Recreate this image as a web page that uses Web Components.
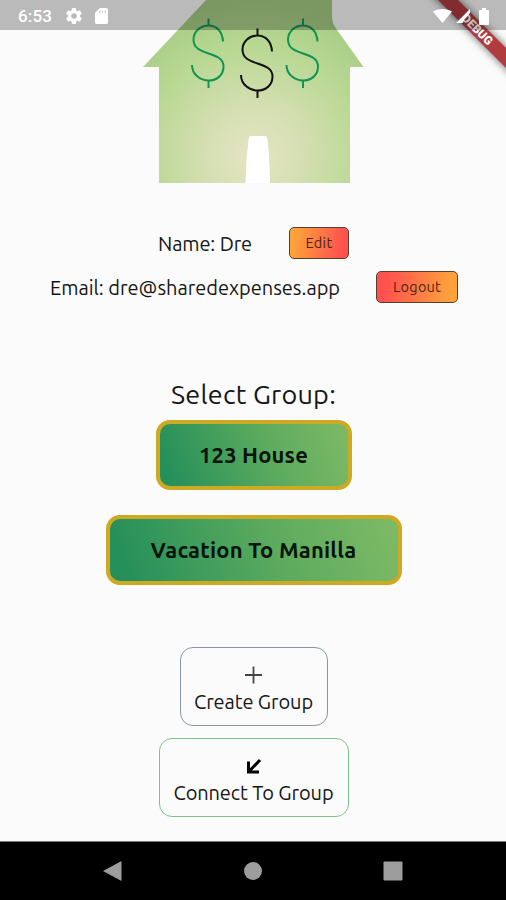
<!DOCTYPE html>
<html lang="en">
<head>
<meta charset="utf-8">
<title>Shared Expenses</title>
<style>
  body { margin: 0; }
</style>
</head>
<body>
<expenses-app></expenses-app>

<script>
// one line of text, tracked so that it spans the given width
class TextLine extends HTMLElement {
  constructor() {
    super();
    this.attachShadow({ mode: "open" });
    this.shadowRoot.innerHTML = `
      <style>
        :host { display:block; white-space:nowrap; }
        span { display:inline-block; }
      </style>
      <span><slot></slot></span>
    `;
  }

  connectedCallback() {
    const span = this.shadowRoot.querySelector("span");
    const target = Number(this.getAttribute("width"));
    const count = this.textContent.length;
    if (!target || !count) return;
    const spacing = (target - span.getBoundingClientRect().width) / count;
    span.style.letterSpacing = `${spacing.toFixed(3)}px`;
  }
}

class StatusBar extends HTMLElement {
  constructor() {
    super();
    this.attachShadow({ mode: "open" });
    this.shadowRoot.innerHTML = `
      <style>
        :host {
          display:flex; align-items:center; box-sizing:border-box; height:30px;
          padding:2px 17px 0 18px; background:rgba(0,0,0,.26); color:#fff;
          font:500 17px/28px Roboto, sans-serif;
        }
        svg { display:block; fill:#fff; }
        .gear { margin-left:14px; }
        .card { margin-left:13px; }
        .wifi { margin-left:auto; }
        .signal { margin-left:4px; }
        .battery { margin-left:9px; }
      </style>
      <text-line width="34">6:53</text-line>
      <svg class="gear" width="16" height="16" viewBox="2 2 20 20"><path d="M19.4 13a7.500 7.500 0 0 0 0-2l2.100-1.600a.5.5 0 0 0 .1-.7l-2-3.400a.5.5 0 0 0-.6-.2l-2.500 1a7.300 7.300 0 0 0-1.700-1l-.4-2.600a.5.5 0 0 0-.5-.5h-4a.5.5 0 0 0-.5.5L9 5.100a7.300 7.300 0 0 0-1.700 1l-2.400-1a.5.5 0 0 0-.6.2l-2 3.400a.5.5 0 0 0 .1.7L4.600 11a7.500 7.500 0 0 0 0 2l-2.200 1.600a.5.5 0 0 0-.1.700l2 3.400c.1.200.4.300.6.200l2.400-1a7.300 7.300 0 0 0 1.700 1l.4 2.600c0 .3.200.5.500.5h4c.3 0 .5-.2.5-.5l.4-2.600a7.300 7.300 0 0 0 1.700-1l2.500 1c.2.100.5 0 .6-.2l2-3.400a.5.5 0 0 0-.1-.7zM12 15.500a3.500 3.500 0 1 1 0-7 3.500 3.500 0 0 1 0 7z"/></svg>
      <svg class="card" width="13" height="16" viewBox="4 2 16 20" preserveAspectRatio="none"><path fill-rule="evenodd" d="M18 2h-8L4 8v12a2 2 0 0 0 2 2h12a2 2 0 0 0 2-2V4a2 2 0 0 0-2-2zM9 5.500h1.300V8H9zm3.500 0h1.300V8h-1.300zm3.500 0h1.300V8H16z"/></svg>
      <svg class="wifi" width="19" height="14" viewBox="0 0 19 14"><path d="M9.500 14 0 2.600C5-.8 14-.8 19 2.600z"/></svg>
      <svg class="signal" width="14" height="14" viewBox="0 0 14 14"><path d="M0 14 14 0v4L8.500 10 6.500 14z"/></svg>
      <svg class="battery" width="10" height="17" viewBox="0 0 10 17"><path d="M3 0h4v2h2q1 0 1 1v13q0 1-1 1H1q-1 0-1-1V3q0-1 1-1h2z"/></svg>
    `;
  }
}

class DebugBanner extends HTMLElement {
  constructor() {
    super();
    this.attachShadow({ mode: "open" });
    this.shadowRoot.innerHTML = `
      <style>
        :host { display:block; width:90px; height:90px; }
        svg { display:block; overflow:hidden; }
        path { filter:drop-shadow(0 0 4px rgba(0,0,0,.6)); }
        text { font:900 12px Roboto, sans-serif; fill:#fff; text-anchor:middle; }
      </style>
      <svg width="90" height="90" viewBox="0 0 90 90">
        <path d="M12-10H32L100 58V78z" fill="#b03c40"/>
        <text transform="translate(58.500 32.500) rotate(45)" textLength="38" lengthAdjust="spacingAndGlyphs">DEBUG</text>
      </svg>
    `;
  }
}

class HouseLogo extends HTMLElement {
  constructor() {
    super();
    this.attachShadow({ mode: "open" });
    this.shadowRoot.innerHTML = `
      <style>
        :host { display:block; height:184px; }
        svg { display:block; margin:0 auto; }
        .sign { fill:none; stroke-width:2; }
      </style>
      <svg width="506" height="184" viewBox="0 0 506 184">
        <defs>
          <radialGradient id="lawn" gradientUnits="userSpaceOnUse" cx="254" cy="156" r="155">
            <stop offset="0" stop-color="#e6e5c4"/>
            <stop offset=".35" stop-color="#d3deb0"/>
            <stop offset=".7" stop-color="#b9d893"/>
            <stop offset="1" stop-color="#a6cd85"/>
          </radialGradient>
          <path id="dollar" d="M14.500-11.500C14-21.500 8-27.500 0-27.500S-15-21.500-15-13.500C-15-5-9-2.500 0 .500S15 6 15 13.500C15 22.500 8 27.500 0 27.500S-16.500 21.500-16.500 12M0-34.500V-27M0 27.500V35"/>
        </defs>
        <path fill="url(#lawn)" d="M206 0H332V15Q332 22 335 27L363.500 67H350V183H270Q269 150 267 137.500 266.500 136 265 136H251Q249.500 136 249 137.500 246 160 245.500 183H159V67H143z"/>
        <path fill="#fff" d="M245.500 183Q246 160 249 137.500 249.500 136 251 136H265Q266.500 136 267 137.500 269 150 270 183z"/>
        <g class="sign">
          <use href="#dollar" x="208.500" y="53" stroke="#119353"/>
          <use href="#dollar" x="257.500" y="63" stroke="#111"/>
          <use href="#dollar" x="303" y="53" stroke="#119353"/>
        </g>
      </svg>
    `;
  }
}

class PillButton extends HTMLElement {
  constructor() {
    super();
    this.attachShadow({ mode: "open" });
    this.shadowRoot.innerHTML = `
      <style>
        :host { display:block; }
        button {
          display:flex; align-items:center; justify-content:center; box-sizing:border-box;
          width:100%; height:32px; padding:0; border:1px solid #54402f; border-radius:5px;
          background:linear-gradient(100deg, #ffa23b 10%, #ff514f 88%);
          font:400 14.500px/20px Ubuntu, "Noto Sans", sans-serif; color:#4b2418;
        }
        :host([reverse]) button { background:linear-gradient(100deg, #ff514f 12%, #ffa23b 90%); }
      </style>
      <button type="button"><slot></slot></button>
    `;
  }
}

class GroupButton extends HTMLElement {
  constructor() {
    super();
    this.attachShadow({ mode: "open" });
    this.shadowRoot.innerHTML = `
      <style>
        :host { display:block; }
        button {
          display:flex; align-items:center; justify-content:center; box-sizing:border-box;
          width:100%; height:70px; padding:0; border:4px solid #cda924; border-radius:14px;
          background:linear-gradient(70deg, #26905a 8%, #5dab5e 58%, #80bb66);
          background-origin:border-box;
          font:700 22px/30px Ubuntu, "Noto Sans", sans-serif; color:#07140b;
        }
      </style>
      <button type="button"><slot></slot></button>
    `;
  }
}

class ActionCard extends HTMLElement {
  constructor() {
    super();
    this.attachShadow({ mode: "open" });
    this.shadowRoot.innerHTML = `
      <style>
        :host { display:block; --line:#8896a3; }
        button {
          display:flex; flex-direction:column; align-items:center; box-sizing:border-box;
          width:100%; height:79px; padding:17px 0 0; border:1px solid var(--line);
          border-radius:13px; background:none;
          font:400 20px/26px Ubuntu, "Noto Sans", sans-serif; color:#161616;
        }
        .icon { display:block; height:24px; }
      </style>
      <button type="button">
        <span class="icon"><slot name="icon"></slot></span>
        <slot></slot>
      </button>
    `;
  }
}

class NavBar extends HTMLElement {
  constructor() {
    super();
    this.attachShadow({ mode: "open" });
    this.shadowRoot.innerHTML = `
      <style>
        :host {
          display:flex; align-items:center; justify-content:space-between; box-sizing:border-box;
          height:59px; padding:0 103px; border-top:1px solid #777; background:#000;
        }
        svg { display:block; fill:#9d9d9d; }
      </style>
      <svg width="19" height="22" viewBox="0 0 19 22"><path d="M18.500 1V21L0 11z"/></svg>
      <svg width="18" height="18" viewBox="0 0 18 18"><circle cx="9" cy="9" r="9"/></svg>
      <svg width="20" height="20" viewBox="0 0 20 20"><rect x=".5" y=".5" width="19" height="19" rx="1"/></svg>
    `;
  }
}

class ExpensesApp extends HTMLElement {
  constructor() {
    super();
    this.attachShadow({ mode: "open" });
    this.shadowRoot.innerHTML = `
      <style>
        :host {
          display:flex; flex-direction:column; position:relative; width:506px; height:900px;
          overflow:hidden; background:#fbfbfb; color:#161616;
          font:400 20px/26px Ubuntu, "Noto Sans", sans-serif;
        }
        debug-banner { position:absolute; top:0; right:0; }
        status-bar { position:absolute; top:0; left:0; right:0; }
        main { flex:1; display:flex; flex-direction:column; }
        .row { display:flex; align-items:center; height:32px; }
        .row > text-line { padding-top:2px; }
        .name { margin-top:43px; padding-left:158px; gap:37px; }
        .email { margin-top:12px; padding-left:50px; gap:36px; }
        .edit { width:60px; }
        .logout { width:82px; }
        h1 { margin:73px 0 0 171px; font-size:27px; line-height:36px; font-weight:400; }
        .groups { display:flex; flex-direction:column; align-items:center; gap:25px; margin:8px 0 0 1px; }
        .house { width:196px; }
        .trip { width:296px; }
        .actions { display:flex; flex-direction:column; align-items:center; gap:12px; margin:62px 0 0 1px; }
        .create { width:148px; }
        .connect { width:190px; --line:#7dc389; }
      </style>
      <main>
        <house-logo></house-logo>
        <div class="row name">
          <text-line width="94">Name: Dre</text-line>
          <pill-button class="edit"><text-line width="27">Edit</text-line></pill-button>
        </div>
        <div class="row email">
          <text-line width="290">Email: dre@sharedexpenses.app</text-line>
          <pill-button class="logout" reverse><text-line width="48">Logout</text-line></pill-button>
        </div>
        <h1><text-line width="165">Select Group:</text-line></h1>
        <div class="groups">
          <group-button class="house"><text-line width="109">123 House</text-line></group-button>
          <group-button class="trip"><text-line width="206">Vacation To Manilla</text-line></group-button>
        </div>
        <div class="actions">
          <action-card class="create">
            <svg slot="icon" width="20" height="20" viewBox="0 0 20 20"><path d="M9.500 1.500V18.500M1 10H18" fill="none" stroke="#444" stroke-width="1.800"/></svg>
            <text-line width="119">Create Group</text-line>
          </action-card>
          <action-card class="connect">
            <svg slot="icon" width="20" height="20" viewBox="0 0 20 20"><path d="M16 4 5 15.500M4.500 5.500V16H15" fill="none" stroke="#000" stroke-width="3"/></svg>
            <text-line width="160">Connect To Group</text-line>
          </action-card>
        </div>
      </main>
      <nav-bar></nav-bar>
      <debug-banner></debug-banner>
      <status-bar></status-bar>
    `;
  }
}

// containers go first: a text line measures itself once its font is inherited
customElements.define("expenses-app", ExpensesApp);
customElements.define("house-logo", HouseLogo);
customElements.define("debug-banner", DebugBanner);
customElements.define("status-bar", StatusBar);
customElements.define("pill-button", PillButton);
customElements.define("group-button", GroupButton);
customElements.define("action-card", ActionCard);
customElements.define("nav-bar", NavBar);
customElements.define("text-line", TextLine);
</script>
</body>
</html>
